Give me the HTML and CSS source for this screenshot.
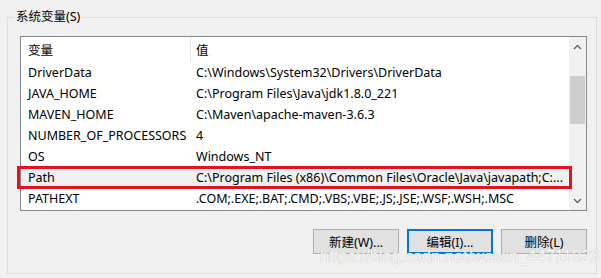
FILE: index.html
```html
<!DOCTYPE html>
<html lang="zh-CN">

<head>
    <meta charset="UTF-8">
    <meta name="viewport" content="width=device-width, initial-scale=1.0">
    <title>系统变量</title>
    <link rel="stylesheet" href="styles.css">
</head>

<body>
    <div class="page">
        <div class="group">
            <div class="group-title">系统变量(S)</div>
            <div class="list">
                <div class="table">
                    <div class="head">
                        <div class="name">变量</div>
                        <div class="value">值</div>
                    </div>
                    <div class="row">
                        <div class="name">DriverData</div>
                        <div class="value">C:\Windows\System32\Drivers\DriverData</div>
                    </div>
                    <div class="row">
                        <div class="name">JAVA_HOME</div>
                        <div class="value">C:\Program Files\Java\jdk1.8.0_221</div>
                    </div>
                    <div class="row">
                        <div class="name">MAVEN_HOME</div>
                        <div class="value">C:\Maven\apache-maven-3.6.3</div>
                    </div>
                    <div class="row">
                        <div class="name">NUMBER_OF_PROCESSORS</div>
                        <div class="value">4</div>
                    </div>
                    <div class="row">
                        <div class="name">OS</div>
                        <div class="value">Windows_NT</div>
                    </div>
                    <div class="row selected">
                        <div class="name">Path</div>
                        <div class="value">C:\Program Files (x86)\Common Files\Oracle\Java\javapath;C:...</div>
                    </div>
                    <div class="row">
                        <div class="name">PATHEXT</div>
                        <div class="value">.COM;.EXE;.BAT;.CMD;.VBS;.VBE;.JS;.JSE;.WSF;.WSH;.MSC</div>
                    </div>
                </div>
                <div class="scroll">
                    <div class="arrow">
                        <svg width="9" height="6" viewBox="0 0 9 6"><polyline points="1,5 4.5,1.5 8,5" fill="none" stroke="#606060" stroke-width="1.3"/></svg>
                    </div>
                    <div class="track">
                        <div class="thumb"></div>
                    </div>
                    <div class="arrow">
                        <svg width="9" height="6" viewBox="0 0 9 6"><polyline points="1,1 4.5,4.5 8,1" fill="none" stroke="#606060" stroke-width="1.3"/></svg>
                    </div>
                </div>
                <div class="mark"></div>
            </div>
            <div class="actions">
                <button type="button" class="btn">新建(W)...</button>
                <button type="button" class="btn focus">编辑(I)...</button>
                <button type="button" class="btn">删除(L)</button>
            </div>
            <div class="watermark">https://blog.csdn.net/weixin_44711823</div>
        </div>
    </div>
</body>

</html>
```

FILE: styles.css
```css
* {
    margin: 0px;
    padding: 0px;
    box-sizing: border-box;
}

body {
    background: #f0f0f0;
    font-family: "Noto Sans", "Noto Sans CJK SC", sans-serif;
    font-size: 12px;
    color: #000;
}

.page {
    padding: 17px 0px 0px 7px;
}

.group {
    position: relative;
    width: 590px;
    height: 257px;
    border: 1px solid #dcdcdc;
    padding: 0px 9px 0px 12px;
}

.group-title {
    width: fit-content;
    height: 18px;
    line-height: 18px;
    margin: -10px 0px 0px -6px;
    padding: 0px 2px;
    background: #f0f0f0;
    font-size: 12.5px;
}

.list {
    position: relative;
    display: flex;
    width: 567px;
    height: 175px;
    margin-top: 10px;
    border: 1px solid #828790;
    background: #fff;
    font-size: 12.5px;
}

.table {
    flex: 1;
}

.head,
.row {
    display: flex;
    height: 21px;
    line-height: 21px;
    white-space: nowrap;
}

.head {
    height: 25px;
    line-height: 27px;
}

.name {
    width: 170px;
    padding-left: 7px;
}

.head .name {
    border-right: 1px solid #e5e5e5;
}

.value {
    padding-left: 5px;
}

.selected {
    background: #f0f0f0;
}

.scroll {
    width: 17px;
    display: flex;
    flex-direction: column;
    background: #f0f0f0;
}

.arrow {
    height: 19px;
    display: flex;
    align-items: center;
    justify-content: center;
}

.track {
    flex: 1;
    padding: 20px 1px 0px 1px;
}

.thumb {
    height: 48px;
    background: #cdcdcd;
}

.mark {
    position: absolute;
    left: -4px;
    top: 129px;
    width: 555px;
    height: 23px;
    border: 3px solid #e2141b;
}

.actions {
    display: flex;
    justify-content: flex-end;
    gap: 8px;
    margin-top: 18px;
}

.btn {
    width: 86px;
    height: 25px;
    border: 1px solid #adadad;
    background: #e1e1e1;
    font-family: "Noto Sans", "Noto Sans CJK SC", sans-serif;
    font-size: 12.5px;
    color: #000;
}

.btn.focus {
    border-color: #0078d7;
    box-shadow: inset 0px 0px 0px 1px #0078d7;
}

.watermark {
    position: absolute;
    left: 312px;
    top: 229px;
    font-family: "Liberation Sans", sans-serif;
    font-size: 16.5px;
    color: #f8f8f8;
    text-shadow: 0px 0px 1px #a8a8a8;
    white-space: nowrap;
}
```
